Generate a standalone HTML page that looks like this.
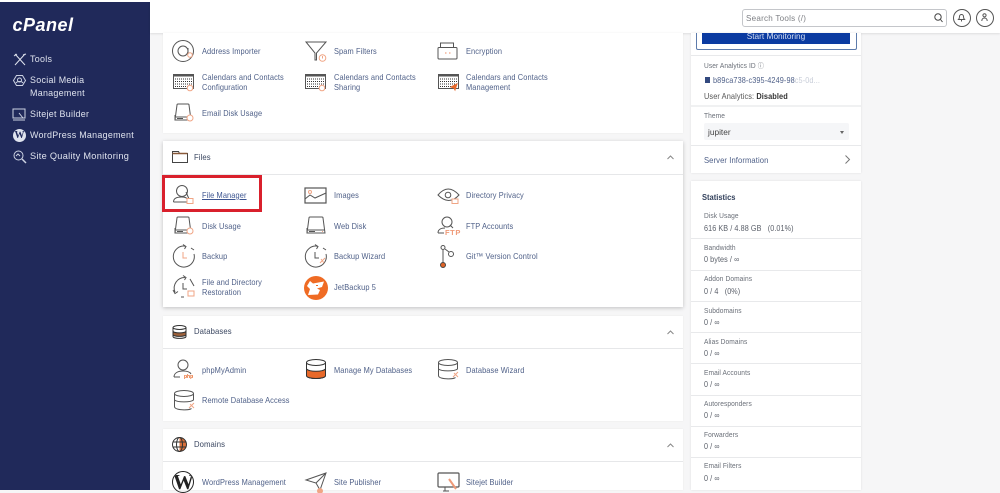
<!DOCTYPE html>
<html lang="en"><head><meta charset="utf-8"><title>cPanel</title>
<style>
html,body{margin:0;padding:0}
body{width:1000px;height:490px;overflow:hidden;position:relative;background:#f6f6f7;font-family:"Liberation Sans",sans-serif}
.a{position:absolute}
.t{position:absolute;white-space:nowrap;font-size:8.4px;line-height:10px;letter-spacing:.12px;color:#4f6088;transform:scaleX(.885);transform-origin:0 0}
.n{position:absolute;white-space:nowrap;font-size:9.4px;line-height:13px;letter-spacing:.3px;color:#dfe3ee;transform:scaleX(.95);transform-origin:0 0}
.h{position:absolute;white-space:nowrap;font-size:8.4px;line-height:10px;letter-spacing:.1px;color:#3a4660;transform:scaleX(.92);transform-origin:0 0}
.l{position:absolute;left:703.5px;white-space:nowrap;font-size:7.6px;line-height:10px;letter-spacing:.1px;color:#6a6f78;transform:scaleX(.87);transform-origin:0 0}
.v{position:absolute;left:703.5px;white-space:nowrap;font-size:8.2px;line-height:10px;letter-spacing:.1px;color:#5b606a;transform:scaleX(.88);transform-origin:0 0}
.p{position:absolute;left:163px;width:520px;background:#fff;box-shadow:0 0 2px rgba(0,0,0,.06)}
.ln{position:absolute;left:691px;width:170px;height:1px;background:#e8e9eb}
svg{position:absolute;overflow:visible;fill:none;stroke:#555;stroke-width:1}
.o{stroke:#f0a585}
</style></head><body>

<div class="a" style="left:0;top:2px;width:150px;height:488px;background:#20295a"></div>
<div class="a" style="left:150px;top:0;width:850px;height:33px;background:#fff;box-shadow:0 1px 2px rgba(0,0,0,.1)"></div>
<div class="a" style="left:0;top:0;width:150px;height:2px;background:#fff"></div>

<div class="a" style="left:12.500px;top:15px;font:italic bold 18px/20px 'Liberation Sans',sans-serif;color:#fff;letter-spacing:.5px">cPanel</div>

<svg style="left:13px;top:53px" width="14" height="13" viewBox="0 0 14 13"><path d="M2 1l10 11M12 1L2 12M1 3l3-2M10 2l3-1" stroke="#dfe3ee"/></svg>
<div class="n" style="left:29.500px;top:52px">Tools</div>
<svg style="left:13px;top:74px" width="13" height="13" viewBox="0 0 13 13"><path d="M3.500 1.500h6l3 5-3 5h-6l-3-5z" stroke="#cdd3e3"/><circle cx="6.500" cy="6" r="2" stroke="#cdd3e3"/><path d="M3 9c1-2 6-2 7 0" stroke="#cdd3e3"/></svg>
<div class="n" style="left:29.500px;top:73px">Social Media</div>
<div class="n" style="left:29.500px;top:86px">Management</div>
<svg style="left:12px;top:108px" width="14" height="13" viewBox="0 0 14 13"><path d="M1 1h12v9H1zM1 12h12M7 5l4 5" stroke="#cdd3e3"/></svg>
<div class="n" style="left:29.500px;top:107px">Sitejet Builder</div>
<div class="a" style="left:13px;top:129px;width:13px;height:13px;border-radius:50%;background:#dfe3ee;color:#20295a;font:bold 10px/13px 'Liberation Serif',serif;text-align:center">W</div>
<div class="n" style="left:29.500px;top:128px">WordPress Management</div>
<svg style="left:13px;top:150px" width="14" height="14" viewBox="0 0 14 14"><circle cx="5.500" cy="5.500" r="4.500" stroke="#cdd3e3"/><path d="M9 9l4 4" stroke="#cdd3e3" stroke-width="1.500"/><path d="M3 6l2-2 2 2" stroke="#cdd3e3"/></svg>
<div class="n" style="left:29.500px;top:149px;transform:scaleX(.98)">Site Quality Monitoring</div>

<div class="a" style="left:742px;top:9px;width:203px;height:16px;border:1px solid #c4c6ca;border-radius:3px;background:#fff"></div>
<div class="a" style="left:746px;top:12.500px;font-size:8.6px;line-height:11px;letter-spacing:.25px;color:#7d7f84;white-space:nowrap;transform:scaleX(.94);transform-origin:0 0">Search Tools (/)</div>
<svg style="left:934px;top:13px" width="9" height="10" viewBox="0 0 9 10"><circle cx="4" cy="4" r="3.200" stroke="#444"/><path d="M6.500 6.500l2 2.500" stroke="#444"/></svg>
<div class="a" style="left:953px;top:9px;width:16px;height:16px;border:1px solid #555;border-radius:50%"></div>
<svg style="left:957px;top:13px" width="9" height="9" viewBox="0 0 9 9"><path d="M1.500 6.500c1-1 1-2 1-3a2 2 0 014 0c0 1 0 2 1 3zM4.500 6.500v2" stroke="#555"/></svg>
<div class="a" style="left:976px;top:9px;width:16px;height:16px;border:1px solid #555;border-radius:50%"></div>
<svg style="left:980px;top:13px" width="9" height="9" viewBox="0 0 9 9"><circle cx="4.500" cy="2.300" r="1.600" stroke="#555"/><path d="M1.800 8c0-4 5.400-4 5.400 0" stroke="#555"/></svg>

<div class="p" style="top:33px;height:100px"></div>
<div class="p" style="top:141px;height:166px;box-shadow:0 1px 4px rgba(0,0,0,.22)"></div>
<div class="a" style="left:163px;top:174px;width:520px;height:1px;background:#e6e7e9"></div>
<div class="p" style="top:316px;height:105px"></div>
<div class="a" style="left:163px;top:348px;width:520px;height:1px;background:#e6e7e9"></div>
<div class="p" style="top:429px;height:61px"></div>
<div class="a" style="left:163px;top:461px;width:520px;height:1px;background:#e6e7e9"></div>

<!-- row 1 -->
<svg style="left:172px;top:40px" width="24" height="23" viewBox="0 0 24 23"><circle cx="11" cy="11" r="10.500"/><circle cx="11" cy="11" r="5"/><path d="M16 8v6c1 2 3 1 3-1"/><circle class="o" cx="18" cy="15" r="2.300" fill="#fff"/></svg>
<div class="t" style="left:201.500px;top:46px">Address Importer</div>
<svg style="left:305px;top:40px" width="22" height="23" viewBox="0 0 22 23"><path d="M1 2h20L11.500 13v7h-1.500V13z"/><circle class="o" cx="17.500" cy="18" r="3.300" fill="#fff"/><path class="o" d="M17.500 16v2.500"/></svg>
<div class="t" style="left:334px;top:46px">Spam Filters</div>
<svg style="left:437px;top:41px" width="22" height="20" viewBox="0 0 22 20"><rect x="1" y="6.500" width="19" height="11.500" rx="1"/><path d="M5 6.500V2h13v4.500" transform="translate(-1.500 0)"/><path d="M8 12h1.500M12 12h1.500" stroke="#f0a585" stroke-width="1.300"/></svg>
<div class="t" style="left:466px;top:46px">Encryption</div>

<!-- row 2 -->
<svg style="left:173px;top:74px" width="24" height="19" viewBox="0 0 24 19"><rect x=".5" y=".5" width="20" height="14" fill="#fff"/><path d="M.5 1.500h20" stroke-width="2"/><path d="M2 5h17M2 7.500h17M2 10h17M2 12.500h14" stroke-dasharray="1 1" stroke="#333"/><circle class="o" cx="17" cy="14" r="2.800" fill="#fff"/></svg>
<div class="t" style="left:201.500px;top:72px">Calendars and Contacts</div>
<div class="t" style="left:201.500px;top:82px">Configuration</div>
<svg style="left:305px;top:74px" width="24" height="19" viewBox="0 0 24 19"><rect x=".5" y=".5" width="20" height="14" fill="#fff"/><path d="M.5 1.500h20" stroke-width="2"/><path d="M2 5h17M2 7.500h17M2 10h17M2 12.500h14" stroke-dasharray="1 1" stroke="#333"/><circle class="o" cx="17" cy="14" r="2.800" fill="#fff"/></svg>
<div class="t" style="left:334px;top:72px">Calendars and Contacts</div>
<div class="t" style="left:334px;top:82px">Sharing</div>
<svg style="left:437.500px;top:74px" width="24" height="19" viewBox="0 0 24 19"><rect x=".5" y=".5" width="20" height="14" fill="#fff"/><path d="M.5 1.500h20" stroke-width="2"/><path d="M2 5h17M2 7.500h17M2 10h17M2 12.500h11" stroke-dasharray="1 1" stroke="#333"/><path d="M13 13l6-3-2 6-1-2z" fill="#e8692a" stroke="#e8692a"/></svg>
<div class="t" style="left:466px;top:72px">Calendars and Contacts</div>
<div class="t" style="left:466px;top:82px">Management</div>

<svg style="left:174px;top:103px" width="22" height="20" viewBox="0 0 22 20"><path d="M1 17l2-15q0-1 1-1h10q1 0 1 1l2 15zM1 12v5M2 14h12M3 15.500h6" /><circle class="o" cx="16" cy="15" r="3" fill="#fff"/></svg>
<div class="t" style="left:201.500px;top:107.500px">Email Disk Usage</div>

<!-- Files header -->
<svg style="left:172px;top:151px" width="16" height="12" viewBox="0 0 16 12"><path d="M.5 2.500V.5h6l1 2h8v9H.5z" stroke="#444"/><path d="M.5 2.500h15" stroke="#8a5a3a" stroke-width="1.500"/></svg>
<div class="h" style="left:194px;top:152px">Files</div>
<svg style="left:667px;top:155px" width="7" height="5" viewBox="0 0 7 5"><path d="M.5 4L3.500 1l3 3" stroke="#888"/></svg>

<svg style="left:173px;top:184px" width="23" height="21" viewBox="0 0 23 21"><circle cx="9" cy="7" r="5.500"/><path d="M.5 18c0-4 4-5 8-5s5 1 6 2M.5 18h13M13 8l3 7"/><rect class="o" x="14" y="14.500" width="6" height="5" fill="#fff"/></svg>
<div class="t" style="left:201.500px;top:190px;color:#3c5490;text-decoration:underline">File Manager</div>
<svg style="left:304px;top:187px" width="24" height="17" viewBox="0 0 24 17"><rect x="1" y="1" width="21" height="15" stroke-width="1.200"/><path d="M1 12l5-4 5 3 11-5"/><circle class="o" cx="6" cy="5" r="1.500"/></svg>
<div class="t" style="left:334px;top:190px">Images</div>
<svg style="left:437px;top:187px" width="24" height="18" viewBox="0 0 24 18"><path d="M1 8q10-12 21 0-10 11-21 0z"/><circle cx="11" cy="8" r="2.800"/><rect class="o" x="15" y="12" width="6" height="4.500" fill="#fff"/></svg>
<div class="t" style="left:466px;top:190px">Directory Privacy</div>

<div class="a" style="left:162px;top:175px;width:94px;height:31px;border:3px solid #d9202c"></div>

<svg style="left:174px;top:216px" width="22" height="20" viewBox="0 0 22 20"><path d="M1 17l2-15q0-1 1-1h10q1 0 1 1l2 15zM1 12v5M2 14h12M3 15.500h6"/><circle class="o" cx="16" cy="15" r="3" fill="#fff"/></svg>
<div class="t" style="left:201.500px;top:220.500px">Disk Usage</div>
<svg style="left:306px;top:216px" width="21" height="20" viewBox="0 0 21 20"><path d="M1 17l2-15q0-1 1-1h12q1 0 1 1l2 15zM1 12v5M2 14h17M3 15.500h6"/><path class="o" d="M16 15.500h1"/></svg>
<div class="t" style="left:334px;top:220.500px">Web Disk</div>
<svg style="left:437px;top:216px" width="24" height="21" viewBox="0 0 24 21"><circle cx="10" cy="6" r="5"/><path d="M1 17c0-4 4-5 7-5M7 17H1M13 9l3 3"/></svg>
<div class="a" style="left:445px;top:228.500px;font:bold 7.500px/8px 'Liberation Sans',sans-serif;letter-spacing:.6px;color:#ef9a78">FTP</div>
<div class="t" style="left:466px;top:220.500px">FTP Accounts</div>

<svg style="left:172.500px;top:245px" width="23" height="23" viewBox="0 0 23 23"><path d="M12.500 1.200A10.500 10.500 0 1 0 21 9M10 -.5l3 2-1.500 2.500M18 3l3 2"/><path class="o" d="M10 7v6h4"/></svg>
<div class="t" style="left:201.500px;top:251px">Backup</div>
<svg style="left:304.500px;top:245px" width="23" height="23" viewBox="0 0 23 23"><path d="M12.500 1.200A10.500 10.500 0 1 0 21 9M10 -.5l3 2-1.500 2.500M18 3l3 2"/><path d="M10 7v6h4"/><path class="o" d="M15 18l5-5M16 14l3 4"/></svg>
<div class="t" style="left:334px;top:251px">Backup Wizard</div>
<svg style="left:440px;top:245px" width="17" height="24" viewBox="0 0 17 24"><circle cx="3" cy="2.500" r="2"/><path d="M5 4l4 3M3 5v14"/><circle cx="11" cy="9" r="2.500"/><circle cx="3" cy="20" r="2.500" fill="#df6326" stroke="#444"/></svg>
<div class="t" style="left:466px;top:251px">Git™ Version Control</div>

<svg style="left:172.500px;top:276px" width="24" height="24" viewBox="0 0 24 24"><path d="M12 1.500A10.500 10.500 0 0 0 2 16M17 3l4 7M10 -.5l3 2-1.500 2.500M0 14l2 3.500 3-2M8 21h3"/><path d="M10 7v6h4"/><rect class="o" x="15" y="15" width="6" height="5"/></svg>
<div class="t" style="left:201.500px;top:277px">File and Directory</div>
<div class="t" style="left:201.500px;top:287px">Restoration</div>
<svg style="left:304px;top:275.500px" width="24" height="24" viewBox="0 0 24 24"><circle cx="12" cy="12" r="12" fill="#ef6b24" stroke="none"/><path d="M6 5l3 2.500 11-2-2 5.500-5 1.500 3 1.500-2 4.500-10 .5 2-6-3-3z" fill="#fff" stroke="none"/><path d="M12 9.500h2" stroke="#ef6b24"/></svg>
<div class="t" style="left:334px;top:282px">JetBackup 5</div>

<!-- Databases -->
<svg style="left:172px;top:325px" width="15" height="14" viewBox="0 0 15 14"><ellipse cx="7.500" cy="2.500" rx="6.500" ry="2" stroke="#333"/><path d="M1 2.500v9c0 2.500 13 2.500 13 0v-9" stroke="#333"/><path d="M1 6c0 2.500 13 2.500 13 0v3.500c0 2.500-13 2.500-13 0z" fill="#a0623a" stroke="#333"/></svg>
<div class="h" style="left:194px;top:326px">Databases</div>
<svg style="left:667px;top:330px" width="7" height="5" viewBox="0 0 7 5"><path d="M.5 4L3.500 1l3 3" stroke="#888"/></svg>

<svg style="left:173px;top:359px" width="22" height="22" viewBox="0 0 22 22"><circle cx="10" cy="6" r="5"/><path d="M1 18c0-4 4-6 9-6s7 1 8 3M1 18h6"/></svg>
<div class="a" style="left:184px;top:374px;font:bold 5px/6px 'Liberation Sans',sans-serif;color:#e8692a">php</div>
<div class="t" style="left:201.500px;top:364.500px">phpMyAdmin</div>
<svg style="left:305.500px;top:359px" width="21" height="21" viewBox="0 0 21 21"><ellipse cx="10" cy="3.500" rx="9.500" ry="3" stroke="#333"/><path d="M.5 3.500v13c0 4 19 4 19 0v-13" stroke="#333"/><path d="M.5 10c3 3 16 3 19 0v6.500c0 4-19 4-19 0z" fill="#e8692a" stroke="#333"/></svg>
<div class="t" style="left:334px;top:364.500px">Manage My Databases</div>
<svg style="left:437.500px;top:359px" width="23" height="21" viewBox="0 0 23 21"><ellipse cx="10" cy="3.500" rx="9.500" ry="3"/><path d="M.5 3.500v13c0 4 15 4 17 2M.5 10c3 2.500 16 2.500 19 0v-6.500"/><path class="o" d="M15 18l5-5M16 14l4 4"/></svg>
<div class="t" style="left:466px;top:364.500px">Database Wizard</div>
<svg style="left:173.500px;top:390px" width="23" height="21" viewBox="0 0 23 21"><ellipse cx="10" cy="3.500" rx="9.500" ry="3"/><path d="M.5 3.500v13c0 4 15 4 17 2M.5 10c3 2.500 16 2.500 19 0v-6.500"/><path class="o" d="M15 18l5-5M16 14l4 4"/></svg>
<div class="t" style="left:201.500px;top:395px">Remote Database Access</div>

<!-- Domains -->
<svg style="left:172px;top:437px" width="15" height="15" viewBox="0 0 15 15"><path d="M7.500.5a7 7 0 010 14z" fill="#d9703a" stroke="none"/><circle cx="7.500" cy="7.500" r="7" stroke="#333"/><ellipse cx="7.500" cy="7.500" rx="3" ry="7" stroke="#333"/><path d="M1 5h13M1 10h13" stroke="#333"/></svg>
<div class="h" style="left:194px;top:439px">Domains</div>
<svg style="left:667px;top:443px" width="7" height="5" viewBox="0 0 7 5"><path d="M.5 4L3.500 1l3 3" stroke="#888"/></svg>

<div class="a" style="left:172px;top:471px;width:20px;height:20px;border:1.500px solid #222;border-radius:50%;font:bold 21px/21px 'Liberation Serif',serif;color:#222;text-align:center;overflow:hidden">W</div>
<div class="t" style="left:201.500px;top:477px">WordPress Management</div>
<svg style="left:305px;top:472px" width="22" height="20" viewBox="0 0 22 20"><path d="M1 8l20-7-6 17-4-7zM11 11L21 1"/><circle cx="15" cy="19" r="3" fill="#f0a585" stroke="none"/></svg>
<div class="t" style="left:334px;top:477px">Site Publisher</div>
<svg style="left:437px;top:472px" width="24" height="20" viewBox="0 0 24 20"><rect x="1" y="1" width="21" height="14" rx="1" stroke-width="1.200"/><path d="M8 15v4M6 19h6"/><path d="M12 7l7 10" stroke="#ef9a78" stroke-width="2"/></svg>
<div class="t" style="left:466px;top:477px">Sitejet Builder</div>

<!-- Right top card -->
<div class="a" style="left:691px;top:33px;width:170px;height:140px;background:#fff;box-shadow:0 0 2px rgba(0,0,0,.1)"></div>
<div class="a" style="left:696px;top:33px;width:159px;height:16px;border:1px solid #5d7bab;border-top:0;border-radius:0 0 2px 2px"></div>
<div class="a" style="left:702px;top:33px;width:148px;height:11px;background:#0b3ba1;color:#d5def2;font-size:8.300px;line-height:6px;text-align:center;letter-spacing:0;overflow:hidden">Start Monitoring</div>
<div class="ln" style="top:55px"></div>
<div class="l" style="top:61px">User Analytics ID <span style="font-size:7px">&#9432;</span></div>
<div class="a" style="left:705px;top:77px;width:5px;height:6px;background:#33497f"></div>
<div class="a" style="left:713px;top:75px;font-size:8.300px;line-height:10px;letter-spacing:.12px;color:#4f6088;white-space:nowrap;transform:scaleX(.88);transform-origin:0 0">b89ca738-c395-4249-98<span style="color:#c8cdd8">c5-0d...</span></div>
<div class="a" style="left:704px;top:91px;font-size:8.300px;line-height:10px;letter-spacing:.1px;color:#555;white-space:nowrap;transform:scaleX(.89);transform-origin:0 0">User Analytics: <b style="color:#333">Disabled</b></div>
<div class="ln" style="top:105px;height:2px;background:#f0f1f2"></div>
<div class="l" style="top:111px">Theme</div>
<div class="a" style="left:704px;top:123px;width:145px;height:17px;background:#f5f6f8;border-radius:2px"></div>
<div class="a" style="left:708px;top:127px;font-size:8.300px;line-height:10px;color:#444">jupiter</div>
<div class="a" style="left:840px;top:131px;width:0;height:0;border:2px solid transparent;border-top:3px solid #666"></div>
<div class="ln" style="top:145px"></div>
<div class="a" style="left:703.500px;top:155px;font-size:8.300px;line-height:10px;letter-spacing:.1px;color:#4f6088;white-space:nowrap;transform:scaleX(.92);transform-origin:0 0">Server Information</div>
<svg style="left:845px;top:155px" width="5" height="9" viewBox="0 0 5 9"><path d="M.5.500l4 4-4 4" stroke="#777"/></svg>

<!-- Statistics -->
<div class="a" style="left:691px;top:181px;width:170px;height:309px;background:#fff;box-shadow:0 0 2px rgba(0,0,0,.1)"></div>
<div class="a" style="left:702px;top:193px;font:bold 8.200px/10px 'Liberation Sans',sans-serif;color:#33415c;white-space:nowrap;transform:scaleX(.92);transform-origin:0 0">Statistics</div>

<div class="l" style="top:211px">Disk Usage</div><div class="v" style="top:224px">616 KB / 4.88 GB &nbsp; (0.01%)</div><div class="ln" style="top:238px"></div>
<div class="l" style="top:242.500px">Bandwidth</div><div class="v" style="top:255px">0 bytes / ∞</div><div class="ln" style="top:270px"></div>
<div class="l" style="top:274px">Addon Domains</div><div class="v" style="top:287px">0 / 4 &nbsp; (0%)</div><div class="ln" style="top:301px"></div>
<div class="l" style="top:305.500px">Subdomains</div><div class="v" style="top:318px">0 / ∞</div><div class="ln" style="top:332px"></div>
<div class="l" style="top:336.500px">Alias Domains</div><div class="v" style="top:349px">0 / ∞</div><div class="ln" style="top:363px"></div>
<div class="l" style="top:368px">Email Accounts</div><div class="v" style="top:380px">0 / ∞</div><div class="ln" style="top:395px"></div>
<div class="l" style="top:399px">Autoresponders</div><div class="v" style="top:411px">0 / ∞</div><div class="ln" style="top:426px"></div>
<div class="l" style="top:430px">Forwarders</div><div class="v" style="top:442px">0 / ∞</div><div class="ln" style="top:457px"></div>
<div class="l" style="top:461px">Email Filters</div><div class="v" style="top:474px">0 / ∞</div>
</body></html>
